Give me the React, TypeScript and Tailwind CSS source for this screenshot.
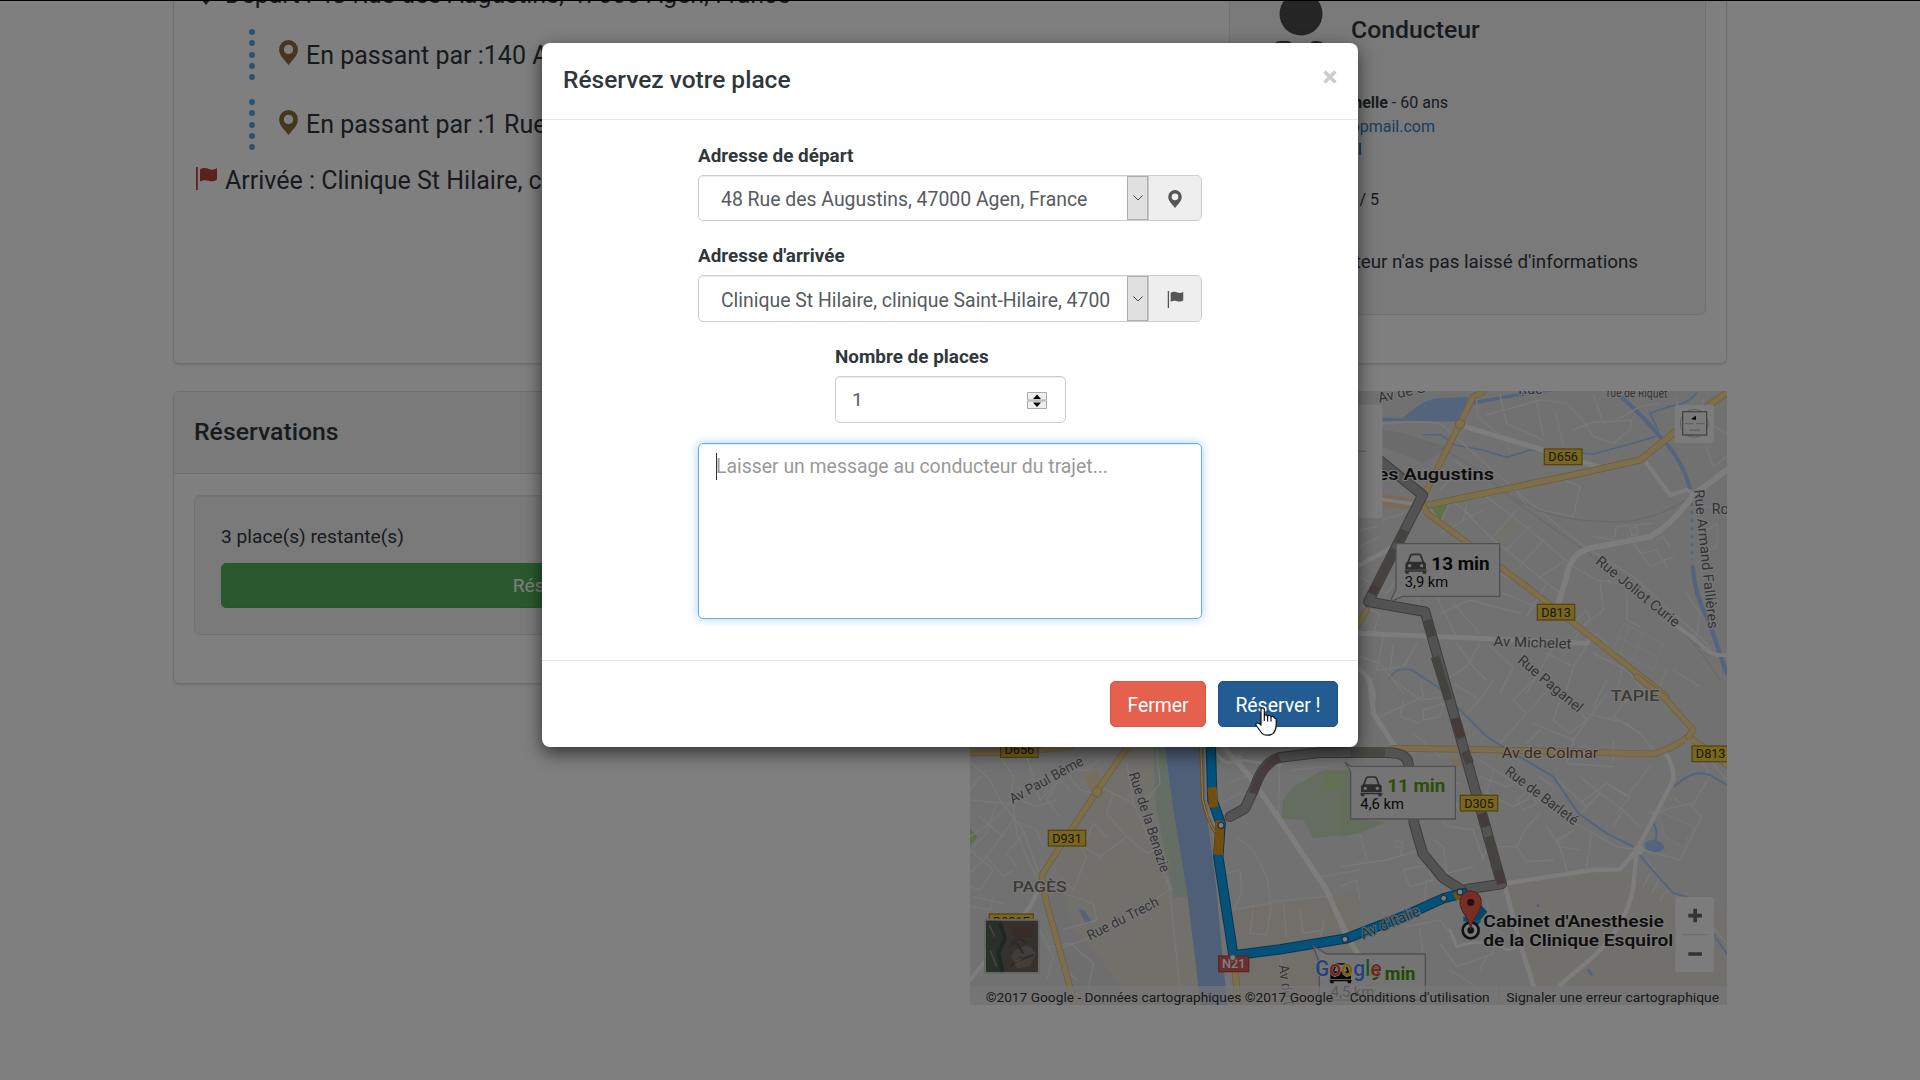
import React from "react";

type Pt = { x: number; y: number; t: string; s?: number; r?: number; f?: string; w?: number; l?: number };

const Txt = ({ x, y, t, s = 43, r = 0, f = "#66666a", w = 400, l }: Pt) => (
  <text
    x={x}
    y={y}
    fontSize={s}
    fontWeight={w}
    fill={f}
    stroke="#f0f0f0"
    strokeWidth={6}
    strokeLinejoin="round"
    paintOrder="stroke"
    textLength={l}
    lengthAdjust="spacingAndGlyphs"
    transform={`rotate(${r} ${x} ${y})`}
  >
    {t}
  </text>
);

const Shield = ({ x, y, w, t, red }: { x: number; y: number; w: number; t: string; red?: boolean }) => (
  <g>
    <rect x={x} y={y} width={w} height={47} fill={red ? "#d95f5f" : "#f5cd3c"} stroke={red ? "#c04848" : "#a88a20"} strokeWidth={4} />
    <text x={x + w / 2} y={y + 37} fontSize={38} textAnchor="middle" fontWeight={red ? 500 : 400} fill={red ? "#fff" : "#33301c"}>
      {t}
    </text>
  </g>
);

const CarIcon = ({ x, y, c = "#5a5a5a" }: { x: number; y: number; c?: string }) => (
  <g transform={`translate(${x} ${y})`}>
    <path d="M10 26 L18 5 Q20 2 24 2 H42 Q46 2 48 5 L56 26" fill="none" stroke={c} strokeWidth={5} />
    <path d="M2 30 Q4 24 10 24 H56 Q62 24 64 30 V48 H2 Z" fill={c} />
    <circle cx={15} cy={36} r={5} fill="#eee" />
    <circle cx={51} cy={36} r={5} fill="#eee" />
    <path d="M0 50H66V54H0Z M2 54H12V60H2Z M54 54H64V60H54Z" fill={c} />
  </g>
);

const Pin = ({ className }: { className: string }) => (
  <svg viewBox="0 0 18 24" className={className} fill="currentColor">
    <path fillRule="evenodd" d="M9 0a9 9 0 0 1 9 9c0 3-1.2 5-2.4 7L9 24 2.400 16C1.200 14 0 12 0 9a9 9 0 0 1 9-9Zm0 4.500a4.500 4.500 0 1 0 0 9 4.500 4.500 0 0 0 0-9Z" />
  </svg>
);

const Flag = ({ className }: { className: string }) => (
  <svg viewBox="0 0 21 23" className={className} fill="currentColor">
    <path d="M0 0h1.800v23H0zM4 2.500c3-2 6-1.800 9-.4 3 1 5.500.6 8-1.100v11.500c-3 2.400-5.500 2-8.500 1.200-3-.9-5.500-.7-8.500.9z" />
  </svg>
);

const Dots = () => (
  <div className="flex w-1.5 flex-col gap-[5.300px]">
    {[0, 1, 2, 3, 4].map((i) => (
      <span key={i} className="size-1.5 rounded-full bg-[#5aa5e0]" />
    ))}
  </div>
);

const ROAD = "#fbfbfb";
const YEL = "#fadc98";
const YELB = "#dcb873";
const WATER = "#a6c8fa";

const Road = ({ d, w = 5, c = ROAD }: { d: string; w?: number; c?: string }) => (
  <path d={d} fill="none" stroke={c} strokeWidth={w} strokeLinejoin="round" strokeLinecap="round" />
);
const Yellow = ({ d, w = 18 }: { d: string; w?: number }) => (
  <>
    <Road d={d} w={w + 4} c={YELB} />
    <Road d={d} w={w} c={YEL} />
  </>
);
const Route = ({ d, c = "#a6a6a6", b = "#7a7a7a", w = 26 }: { d: string; c?: string; b?: string; w?: number }) => (
  <>
    <Road d={d} w={w + 6} c={b} />
    <Road d={d} w={w} c={c} />
  </>
);
const Seg = ({ d, c, w = 26 }: { d: string; c: string; w?: number }) => (
  <path d={d} fill="none" stroke={c} strokeWidth={w} strokeLinejoin="round" />
);

/* The groups below each use a 3x drawing grid anchored on a part of the map. */
const RouteMap = () => (
  <svg viewBox="970 391 757 614" className="h-[614px] w-[757px] shrink-0 font-['Roboto',sans-serif]">
    <rect x={970} y={391} width={757} height={614} fill="#e3e3e4" />

    {/* north east base */}
    <g transform="translate(1340 380) scale(.33333)">
      <path d="M0 130 L128 150 L330 200 L250 250 L128 200 Z" fill="#d8d8d8" />
      <path d="M60 112 L190 114 Q250 55 300 55 L385 50 L360 125 L190 122 L60 124Z" fill={WATER} />
      <Road d="M370 74 L530 45 L640 28" w={11} c={WATER} />
      <Road d="M820 33 Q880 75 960 170 Q1030 240 1052 335" w={12} c={WATER} />
      <path d="M1055 345 L1056 540" fill="none" stroke={WATER} strokeWidth={7} strokeDasharray="10 14" />
      <Road d="M1058 560 Q1065 650 1105 720 L1160 880" w={13} c={WATER} />
      <Road d="M250 165 L300 163 L345 195 L430 210 L500 232 L570 210 L640 212 L760 222 L860 195 L945 170" w={5} c={WATER} />
      <Road d="M1070 40 Q1040 75 985 80 L930 100 L955 150" w={5} c={WATER} />
      <Road d="M150 895 Q165 860 215 870 L330 945" w={5} c={WATER} />
      <path d="M265 378 L328 372 L302 425 Z" fill="#bfe09c" stroke="#f2f2f2" strokeWidth={5} />
      <path d="M128 340 L225 358 L225 390 L128 380Z" fill="#f3d5b8" />
      <path d="M505 415 L545 440 L495 480 L450 485 Z" fill="#e7e2d6" />

      {[
        "M128 130L235 125L300 130L345 170L560 360L720 490L880 590L1000 700L1090 780L1130 830L1160 825",
        "M410 50L412 110L500 180L510 220",
        "M440 105L600 60L680 70L720 110L760 170L820 190L870 150L875 120L810 125L755 128L700 150",
        "M480 45L500 130L610 180",
        "M590 60L610 170M645 90L670 200M760 45L790 130M830 120L900 80L960 70",
        "M1010 55L1020 130L1090 120L1160 160M1090 60L1100 120",
        "M530 330L560 380L700 410L720 320L650 290L590 310",
        "M440 350L570 450L700 560L770 600L860 610",
        "M370 390L450 470L560 560L660 640M460 470L530 390M500 510L570 440M540 560L610 480M600 590L680 540M620 610L560 710",
        "M400 410L330 360M300 460L430 390M300 330L350 280M340 240L420 290M380 370L370 420",
        "M480 580L610 650M490 640L590 680M340 670L420 760M300 700L390 660L540 700M230 640L240 690M290 650L350 770",
        "M860 460L900 520L950 510L980 560M890 500L930 560L1000 530M760 470L820 480L830 440L940 430",
        "M870 445L890 440L890 465L875 465ZM950 480L970 470L990 500",
        "M700 730L740 690L750 720L690 790M720 740L780 770L850 850L830 940",
        "M780 600L790 690L700 760M860 620L860 720L900 740M1000 740L1070 770L1080 700L1040 640",
        "M60 500L120 470M60 590L140 640L170 600M128 420L190 400M60 450L110 440M60 680L120 700L100 760M60 830L120 850L190 940",
        "M130 770L110 870L180 860M230 790L190 860M160 790L150 870M350 790L400 860L440 900M420 790L380 860L300 910M450 800L520 860L480 940",
        "M640 800L600 870L560 940M620 820L700 860L740 800M700 860L680 930M760 820L860 870L920 940M980 870L950 940M1000 870L1080 920",
        "M1090 380L1160 385M1090 460L1130 430L1130 500L1110 510M1100 200L1120 260L1160 230",
      ].map((d) => (
        <Road key={d} d={d} w={4} c="#f2f2f2" />
      ))}
      <path d="M850 730L970 790L940 870L820 810ZM870 740L840 820M910 750L880 840M830 770L950 830" fill="none" stroke="#ededee" strokeWidth={3} />
      <Road d="M520 350 Q620 430 860 425 Q970 410 1060 345" w={4} c="#d2d2d2" />
      <Road d="M128 150 Q330 180 520 360 L760 530 Q1000 680 1140 900" w={5} c="#d4d4d4" />
      <Road d="M375 140 L610 210 L790 265" w={15} />
      <Road d="M655 670 L680 590 Q690 520 750 505 L930 470 Q990 440 1060 345 L1160 270" w={17} />
      <Road d="M920 250 L990 345 L1040 330 L1060 340" w={13} />
      <Road d="M60 760 L420 775 L740 790 L760 770" w={14} />
      <Road d="M60 555 L170 495" w={14} />
      <Road d="M128 358 L220 372" w={10} />
      <Road d="M1000 730 L1080 790 Q1110 830 1160 825" w={11} />
      <Road d="M60 870 Q100 900 100 960" w={14} />
      <Yellow d="M430 36 L400 50 L360 130 L310 230 L255 340" w={15} />
      <Yellow d="M1165 36 L1100 80 L900 240 L700 285 L250 378" w={17} />
      <Yellow d="M250 378 L262 400 L560 620 L740 760 L980 950" w={15} />
      <Yellow d="M50 740 L80 690" w={15} />
      <circle cx={360} cy={132} r={14} fill={YEL} stroke={YELB} strokeWidth={3} />
    </g>

    {/* south west base */}
    <g transform="translate(960 690) scale(.33333)">
      <path d="M485 230 L600 160 L720 945 L450 945 L340 700 L290 540 L380 330 Z" fill="#e5e0d6" />
      <path d="M485 230 L560 90 L620 150 L680 620 L720 945 L560 945 L510 870 L430 800 Z" fill="#e5e0d6" />
      <path d="M580 130 L612 170 L684 622 L640 622 L585 330 Z" fill="#ccdacb" />
      <path d="M600 60 L730 60 L735 330 L765 560 L802 945 L722 945 L680 600 L640 360 Z" fill="#9fbff0" />
      <path d="M820 660 L1200 610 L1200 945 L830 945 Z" fill="#e5ddd2" />
      <path d="M970 330 L1000 290 L1090 240 L1200 240 L1200 430 L1060 445 L1030 390 L965 385Z" fill="#c8dabf" />
      <path d="M1095 245 L1165 250 L1165 300 L1095 300Z" fill="#c3dfa6" />
      <path d="M30 415 L52 440 L30 468Z" fill="#b5dc92" />
      <path d="M355 657 L372 660 L394 690 L388 703 L374 696Z" fill={WATER} />
      <path d="M370 260 L410 240 L430 280 L400 310Z" fill="#f1d9b4" />
      <path d="M300 570 L345 720 L480 880 L500 945 L340 945 L265 640Z" fill="#dcdcdd" />
      {[
        "M30 215L90 270L120 330L190 420L240 560M120 200L160 260L150 340L90 400L30 440",
        "M30 330L140 340L180 330L230 350L290 330M60 260L30 300M200 200L240 330L300 270L330 300",
        "M30 550L80 500L160 390L230 420L250 470M80 500L130 560L160 540M30 480L100 540L60 600L30 590",
        "M160 350L170 430L210 520L230 560M60 380L130 440M110 340L80 430L40 470M190 430L140 490L170 530",
        "M240 290L300 240L380 240L420 210M300 380L260 330L290 280M330 260L360 300L400 310",
        "M420 290L460 310L520 340M460 310L440 370L500 440L420 500L370 470L400 400L440 440M500 440L560 490L600 470",
        "M360 470L380 500L340 600L300 560M310 610L400 640L410 690L310 720M280 500L240 540",
        "M290 780L400 740L480 690L630 600L600 520L520 340L500 220M630 610L660 900",
        "M270 770L330 760L400 820L380 920M300 820L350 870M130 640L40 620M170 670L200 720L240 760M80 800L60 860",
        "M590 180L600 280L560 330M620 560L635 600M230 700L280 800L260 870M30 650L90 660L100 620",
        "M830 440L880 480L920 560L930 635L1100 620M800 550L840 540L845 610L820 660L930 640M880 660L870 730L920 735L935 640",
        "M780 340L840 310L900 320M790 370L870 370M800 280L860 260M960 170L955 400M1000 240L1100 230M860 180L820 200",
        "M970 640L980 740M1090 690L1080 760M960 800L990 945M1080 560L1200 540M1020 660L1030 730L1090 720",
      ].map((d) => (
        <Road key={d} d={d} w={4} c="#f0f0ef" />
      ))}
      <Road d="M30 870 L210 650 L245 580" w={12} />
      <Road d="M790 170 L870 260 L960 390 L1100 600 L1160 740 L1200 800" w={16} />
      <Road d="M770 190 Q800 240 840 200 M840 210 L960 225" w={9} />
      <Yellow d="M30 188 L130 188 L330 172" w={14} />
      <Yellow d="M510 160 L410 305 L340 410 L245 555 L260 640 L345 945" w={15} />
      <circle cx={411} cy={306} r={15} fill={YEL} stroke={YELB} strokeWidth={3} />
      <Yellow d="M822 805 L835 945" w={17} />
      <Road d="M722 160 L728 330 Q745 400 765 425" w={10} c="#e39a22" />
      <Road d="M722 160 L728 330 Q745 400 765 425" w={3} c="#fff" />
      <Road d="M740 340 L790 700" w={4} c="#e8cda0" />
    </g>

    {/* south east base */}
    <g transform="translate(1340 680) scale(.33333)">
      <path d="M500 612 L760 572 L840 580 L1000 640 L1160 690 L1160 915 L580 915 L540 790Z" fill="#e5e1d8" />
      <path d="M0 282 L30 290 L36 420 L140 425 L60 460 L0 470Z" fill="#c5dab8" />
      <path d="M330 235 H390 V262 L340 258Z" fill="#f1d9b4" />
      <path d="M955 395 L1060 440 L1030 500 L975 470Z" fill="#dededf" stroke="#eee" strokeWidth={3} />
      {[
        "M160 0L240 60L330 50M120 110L250 50L240 0M190 60L180 110L240 130M250 90L310 70L300 110L250 120Z",
        "M340 10L420 60L460 0M420 60L360 120M480 190L560 100L650 0M560 100L520 60L580 0M580 130L700 180L800 40",
        "M620 0L660 60L640 120L690 160L740 120L710 80M740 100L860 130L910 170L940 210M760 80L800 0M860 60L820 110L900 160",
        "M700 180L680 250L820 260M820 180L820 240M560 190L600 150M420 240L540 320L650 400L760 460L830 500L900 510",
        "M420 290L500 320L560 300M460 270L440 340L520 380L560 360L580 330M530 360L570 330L590 370L550 390ZM600 290L640 320",
        "M640 290L740 380L780 340L720 290M740 380L700 430M780 340L850 390L900 440M850 390L820 440M800 310L860 350L930 260M720 370L800 310L870 350L830 400",
        "M650 490L700 450L650 480L670 530L680 570M755 455L740 560M620 440L660 500L720 510M530 500L560 440L600 400M430 540Q430 500 480 500L530 500L560 545L640 540",
        "M930 400L1050 370L1085 410L1020 540L910 510M1000 350L1020 370M1050 250L1110 240L1160 300M1085 240L1110 290L1060 370",
        "M930 580L910 620M960 590L935 640M990 620L960 660M920 540L1000 640L1100 720L1160 790M1000 640L1060 700",
        "M0 560L140 540L240 510M190 570L260 555L280 600L210 620ZM260 600L250 690L220 720M180 500L165 500L170 480L190 490L180 530",
        "M280 480L310 500L320 580L400 560M60 460L80 540M0 620L50 600L60 660M290 380L320 440M330 440L400 450L430 540M250 400L310 360L420 390",
        "M440 660L450 740L520 780M200 740L300 720L350 780M240 750L250 830M300 790L350 860L460 820L460 740M330 870L400 915M420 870L440 830",
        "M220 160L300 230M240 330L360 310M280 260L330 330L360 400M210 220L270 200L340 210",
      ].map((d) => (
        <Road key={d} d={d} w={4} c="#f2f2f2" />
      ))}
      <Road d="M350 80 L440 170 L530 225 L640 290 L715 400 L800 460 L880 500 L920 550 L1000 640 L1040 650 L1160 820" w={6} c={WATER} />
      <Road d="M1005 318 Q1060 265 1110 285 L1160 315 M940 430 Q955 450 947 480" w={6} c={WATER} />
      <path d="M915 490 Q935 472 960 485 L974 500 Q965 520 940 515 L917 508Z" fill={WATER} />
      <path d="M740 868 L748 866 L760 884 L752 888Z" fill={WATER} />
      <circle cx={594} cy={677} r={5} fill={WATER} />
      <Road d="M90 0 L100 100 L165 200" w={15} />
      <Road d="M500 610 L755 570 L840 568 L890 510 L1000 300 Q1000 240 970 215" w={13} />
      <Road d="M890 510 L880 620 Q860 740 760 830 L660 915" w={13} />
      <Road d="M495 620 L540 790 L580 915" w={14} />
      <Road d="M-10 690 L60 840" w={10} />
      <Road d="M330 750 L350 800 Q440 770 500 810 L540 800" w={8} />
      <circle cx={895} cy={510} r={16} fill={ROAD} />
      <Yellow d="M160 205 L400 208 L940 222 Q1000 205 1045 170 L1130 230 L1170 262" w={16} />
      <Yellow d="M890 -10 L970 50 L1060 150 L1045 170" w={15} />
      <path d="M1045 178 L1032 190 L1066 190Z" fill="#e3e3e4" />
    </g>

    {/* grey alternative routes */}
    <g transform="translate(1340 680) scale(.33333)">
      <Route d="M105 -670 L248 -555 L85 -235 L255 -205 L485 612 L380 628" />
      <Seg d="M193 -450 L172 -408 M165 -392 L108 -280 M262 -180 L276 -130 M285 -70 L325 60 M352 130 L366 175 M375 215 L390 250 M445 470 L475 575" c="#8b8780" />
      <Seg d="M108 -282 L96 -258 M345 115 L362 170 M425 400 L438 440 M474 570 L484 612" c="#8b7374" />
      <Route d="M-330 410 L-285 385 L-255 320 Q-230 245 -180 232 L-60 218 L130 218 Q200 215 205 250 L222 430 L248 520 L310 595 L365 630" />
      <Seg d="M-260 340 Q-240 260 -182 233" c="#8f7b7c" />
      <Seg d="M30 218 L135 218" c="#918e84" />
    </g>

    {/* blue selected route */}
    <g transform="translate(960 690) scale(.33333)">
      <Route d="M752 150 L757 330 L782 400 L775 500 L820 796 L960 778 L1130 750 L1160 745 L1340 675 L1450 625 L1510 610 L1545 690" c="#08a5f4" b="#0d6ca8" w={25} />
      <Seg d="M756 292 L761 352 M780 392 L775 494" c="#ef9b1a" w={27} />
      <Seg d="M1484 621 L1500 613" c="#ef9b1a" w={25} />
      <path d="M1510 680 H1570 L1560 690 L1565 695 H1510Z" fill="#08a5f4" />
      <path d="M1540 620 L1582 665 L1560 690 H1520Z" fill="#0b8ad0" />
      {[[783, 406], [818, 803], [1156, 748], [1451, 625], [1500, 606]].map(([x, y]) => (
        <circle key={x} cx={x} cy={y} r={9} fill="#fff" stroke="#3d6e8e" strokeWidth={4} />
      ))}
    </g>

    {/* labels */}
    <g transform="translate(1340 380) scale(.33333)">
      <Txt x={118} y={68} t="Av de G" r={-13} />
      <Txt x={535} y={42} t="Rue" />
      <Txt x={800} y={50} t="rue de Riquet" r={1} s={38} l={182} />
      <Txt x={1062} y={330} t="Rue Armand Fallières" r={84} l={420} />
      <Txt x={1115} y={402} t="Rou" />
      <Txt x={764} y={548} t="Rue Joliot Curie" r={39} l={310} />
      <Txt x={460} y={798} t="Av Michelet" r={2} l={234} />
      <Txt x={530} y={845} t="Rue Paganel" r={40} l={240} />
      <Txt x={812} y={964} t="TAPIE" s={44} w={500} f="#7a7568" l={146} />
      <Txt x={-40} y={300} t="Rue des Augustins" s={49} w={600} f="#1c1c1c" l={502} />
      <Shield x={613} y={207} w={113} t="D656" />
      <Shield x={592} y={673} w={112} t="D813" />
      <path d="M168 491 H479 V649 H188 L150 666 L168 628Z" fill="#e8e8e8" stroke="#a0a0a0" strokeWidth={4} />
      <CarIcon x={194} y={521} />
      <text x={274} y={569} fontSize={53} fontWeight={700} textLength={175} lengthAdjust="spacingAndGlyphs" fill="#111">13 min</text>
      <text x={194} y={620} fontSize={44} textLength={131} lengthAdjust="spacingAndGlyphs" fill="#111">3,9 km</text>
      <path d="M0 74 H122 Q127 74 127 79 V408 Q127 414 122 414 H0Z" fill="#f8f8f8" />
      <path d="M0 214H78" stroke="#bbb" strokeWidth={3} />
      <rect x={1004} y={75} width={118} height={114} rx={7} fill="#f8f8f8" />
      <circle cx={1063} cy={130} r={42} fill="none" stroke="#bcbcbc" strokeWidth={3} />
      <rect x={1028} y={95} width={72} height={70} fill="#f4f4f4" stroke="#8a8a8a" strokeWidth={4} />
      <path d="M1034 124H1094V138H1034Z" fill="#f4f4f4" />
      <path d="M1034 131H1060M1068 131H1094M1048 150H1080" stroke="#c4c4c4" strokeWidth={4} />
      <path d="M1054 116 L1068 107 V119 H1058Z" fill="#111" />
    </g>
    <g transform="translate(960 690) scale(.33333)">
      <Shield x={122} y={155} w={112} t="D656" />
      <Shield x={265} y={421} w={112} t="D931" />
      <Shield x={88} y={672} w={132} t="D931E" />
      <Shield x={776} y={798} w={90} t="N21" red />
      <circle cx={818} cy={803} r={9} fill="#fff" stroke="#8a8a9a" strokeWidth={4} />
      <Txt x={158} y={342} t="Av Paul Bême" r={-29} l={246} />
      <Txt x={506} y={252} t="Rue de la Benazie" r={72} l={312} />
      <Txt x={390} y={752} t="Rue du Trech" r={-27} l={235} />
      <Txt x={158} y={607} t="PAGÈS" s={45} w={500} f="#7a7568" l={162} />
      <Txt x={956} y={826} t="Av du Dr" r={83} l={150} />
      <rect x={72} y={686} width={168} height={166} rx={10} fill="#d0d0d0" />
      <rect x={78} y={692} width={156} height={154} rx={4} fill="#6d6259" />
      <path d="M78 692H125L140 745L120 790L132 846H78Z" fill="#565e54" />
      <path d="M120 700L135 745L115 790L128 846" fill="none" stroke="#3c5047" strokeWidth={12} />
      <path d="M150 705L190 715L225 700L215 745L160 740Z" fill="#72594f" />
      <path d="M165 780L200 765L228 790L210 830L170 835L155 800Z" fill="#857b70" />
      <path d="M145 770L170 760L190 790M180 810L220 795M150 830L185 800M150 760L180 745L200 760" stroke="#5a564c" strokeWidth={6} fill="none" />
      <path d="M88 705L104 740M90 780L110 830M165 815L185 805M200 780L215 775" stroke="#8a8a7c" strokeWidth={5} />
    </g>
    <g transform="translate(1340 680) scale(.33333)">
      <path d="M-62 850 L-80 798 L-40 822 H256 V960 H-62Z" fill="#e8e8e8" stroke="#a0a0a0" strokeWidth={4} />
      <CarIcon x={-31} y={850} c="#111" />
      <text x={90} y={899} fontSize={53} fontWeight={700} fill="#42920a" textLength={136} lengthAdjust="spacingAndGlyphs">9 min</text>
      <text x={-28} y={950} fontSize={44} fill="#444" textLength={131} lengthAdjust="spacingAndGlyphs">4,5 km</text>
      <path d="M32 259 H346 V417 H32 V275 L15 246Z" fill="#e8e8e8" stroke="#a0a0a0" strokeWidth={4} />
      <CarIcon x={61} y={289} />
      <text x={142} y={336} fontSize={53} fontWeight={700} textLength={174} lengthAdjust="spacingAndGlyphs" fill="#5a9c12">11 min</text>
      <text x={61} y={388} fontSize={44} textLength={131} lengthAdjust="spacingAndGlyphs" fill="#111">4,6 km</text>
      <Shield x={361} y={346} w={112} t="D305" />
      <Shield x={1056} y={198} w={112} t="D813" />
      <Txt x={485} y={235} t="Av de Colmar" f="#80522c" l={290} />
      <Txt x={492} y={280} t="Rue de Barleté" r={37} l={262} />
      <text x={70} y={778} fontSize={44} fill="#48606f" stroke="#a4d4f2" strokeWidth={6} paintOrder="stroke" textLength={188} lengthAdjust="spacingAndGlyphs" transform="rotate(-23 70 778)">Av d'Italie</text>
      <circle cx={15} cy={778} r={9} fill="#fff" stroke="#3d6e8e" strokeWidth={4} />
      <circle cx={392} cy={751} r={24} fill="#f4f4f4" stroke="#222" strokeWidth={8} />
      <circle cx={392} cy={751} r={10} fill="#222" />
      <path d="M392 748 C388 710 360 700 360 665 A32 32 0 0 1 424 665 C424 700 396 710 392 748Z" fill="#ea5f4c" stroke="#a83a2d" strokeWidth={3} />
      <circle cx={392} cy={667} r={11} fill="#5a1a14" />
      <Txt x={430} y={742} t="Cabinet d'Anesthesie" s={49} w={600} f="#1c1c1c" l={542} />
      <Txt x={430} y={799} t="de la Clinique Esquirol" s={49} w={600} f="#1c1c1c" l={570} />
      <rect x={1006} y={651} width={116} height={226} rx={6} fill="#f8f8f8" />
      <path d="M1028 764H1102" stroke="#d4d4d4" strokeWidth={3} />
      <path d="M1045 707H1086M1065.500 686V727M1045 822H1086" stroke="#666" strokeWidth={11} />
      <path d="M-1110 918H1160V974H-1110Z" fill="#efefef" fillOpacity={0.65} />
      <path d="M476 918V974" stroke="#ddd" strokeWidth={2} />
      <g fontSize={41} fill="#333">
        <text x={-1063} y={965} textLength={1042} lengthAdjust="spacingAndGlyphs">©2017 Google - Données cartographiques ©2017 Google</text>
        <text x={29} y={965} textLength={420} lengthAdjust="spacingAndGlyphs">Conditions d'utilisation</text>
        <text x={499} y={965} textLength={638} lengthAdjust="spacingAndGlyphs">Signaler une erreur cartographique</text>
      </g>
      <g fontSize={66} fontWeight={500} stroke="#fff" strokeWidth={3} paintOrder="stroke">
        <text x={-75} y={888} textLength={200} lengthAdjust="spacingAndGlyphs">
          <tspan fill="#4285f4">G</tspan>
          <tspan fill="#ea4335">o</tspan>
          <tspan fill="#fbbc05">o</tspan>
          <tspan fill="#4285f4">g</tspan>
          <tspan fill="#34a853">l</tspan>
          <tspan fill="#ea4335">e</tspan>
        </text>
      </g>
    </g>
  </svg>
);

const TripPanel = () => (
  <section className="flex h-[364px] justify-between rounded-b-md border border-t-0 border-[#ddd] bg-white pl-[21px] pr-5 shadow-sm">
    <div className="flex flex-col text-[25px] leading-[32px]">
      <div className="-mt-[21px] flex h-8 items-center whitespace-nowrap">
        <Pin className="-mt-1 ml-[2px] mr-2.5 h-6 w-[18px] text-[#333]" />
        <span>Départ : 48 Rue des Augustins, 47000 Agen, France</span>
      </div>
      <div className="mt-[18px] flex h-[52px] items-start pl-[54px]">
        <Dots />
        <Pin className="ml-6 mt-[11px] h-[25px] w-[19px] text-[#8a6d3b]" />
        <span className="ml-2 mt-[11px] whitespace-nowrap">En passant par :140 Avenue</span>
      </div>
      <div className="mt-[18px] flex h-[52px] items-start pl-[54px]">
        <Dots />
        <Pin className="ml-6 mt-[11px] h-[25px] w-[19px] text-[#8a6d3b]" />
        <span className="ml-2 mt-[10px] whitespace-nowrap">En passant par :1 Rue</span>
      </div>
      <div className="mt-[14px] flex h-8 items-start">
        <Flag className="ml-px mt-[2px] h-[23px] w-[21px] text-[#b7433b]" />
        <span className="ml-2 whitespace-nowrap">Arrivée : Clinique St Hilaire, clinique</span>
      </div>
    </div>
    <aside className="flex h-[315px] w-[477px] flex-col rounded-b-md border border-t-0 border-[#e3e3e3] bg-[#f5f5f5] pl-[41px]">
      <div className="flex h-[87px]">
        <svg viewBox="0 0 60 60" className="h-[60px] w-[60px] shrink-0 text-[#4a4a4a]" fill="currentColor">
          <circle cx="30" cy="14" r="21.500" />
          <path d="M2 60V49q0-8 8-8h6q4 0 6 4l8 9 8-9q2-4 6-4h2q8 0 8 8v11z" />
        </svg>
        <h3 className="ml-[20px] mt-3 text-[24.800px] font-medium leading-9">Conducteur</h3>
      </div>
      <div className="flex w-[177px] flex-col items-end whitespace-nowrap text-base leading-6">
        <p className="mt-1"><b>Michelle</b> - 60 ans</p>
        <p className="mr-[13px] text-[#337ab7]">yopmail.com</p>
        <p className="-mt-px mr-[86px] text-[#1f4f7c]">Email</p>
        <p className="mr-[69px] mt-[26px]">5 / 5</p>
      </div>
      <p className="mt-[38px] w-[367px] self-start whitespace-nowrap text-[18.800px] leading-6">
        <span className="float-right">Le conducteur n'as pas laissé d'informations</span>
      </p>
    </aside>
  </section>
);

const ReservationPanel = () => (
  <section className="h-[293px] w-[757px] rounded-md border border-[#ddd] bg-white shadow-sm">
    <header className="flex h-[82px] items-center border-b border-[#ddd] bg-[#f5f5f5] pb-0.5 pl-5">
      <h3 className="text-[24.800px] font-medium">Réservations</h3>
    </header>
    <div className="mx-5 mt-[21px] h-[140px] rounded-md border border-[#e3e3e3] bg-[#f5f5f5] px-[26px] pt-7 shadow-[inset_0_1px_1px_rgba(0,0,0,.05)]">
      <p className="relative top-px text-[19.200px] leading-6">3 place(s) restante(s)</p>
      <div className="mt-[15px] flex h-[45px] items-center justify-center rounded-[5px] border border-[#4cae4c] bg-[#57b25f] pr-[3px] pt-0.5 text-[19.200px] text-white">Réserver</div>
    </div>
  </section>
);

const SelectRow = ({ label, value, icon, h, cls }: { label: string; value: string; icon: React.ReactNode; h: string; cls: string }) => (
  <div className={cls}>
    <div className="h-[31px] text-[18.900px] font-bold leading-6">{label}</div>
    <div className={`flex ${h} overflow-hidden rounded-[5px] border border-[#ccc] text-[#555b60] shadow-[inset_0_1px_1px_rgba(0,0,0,.075)]`}>
      <div className="flex w-[428px] items-center overflow-hidden whitespace-nowrap pl-[22px] pt-1 text-[19.400px]">{value}</div>
      <div className="flex w-[21px] items-center justify-center border border-[#adadad] bg-[#e1e1e1]">
        <svg viewBox="0 0 10 6" className="h-1.5 w-2.5" fill="none" stroke="#444"><path d="M.5.500 5 5 9.500.500" /></svg>
      </div>
      <div className="flex flex-1 items-center justify-center border-l border-[#ccc] bg-[#eee] pt-0.5 text-[#555]">{icon}</div>
    </div>
  </div>
);

const Modal = () => (
  <div className="flex h-[704px] w-[816px] flex-col rounded-lg bg-white shadow-[0_6px_18px_rgba(0,0,0,.6)]">
    <header className="flex h-[77px] items-start justify-between border-b border-[#e5e5e5] pl-[21px] pr-[21px]">
      <h4 className="mt-[19px] text-[24.500px] font-medium leading-9">Réservez votre place</h4>
      <svg viewBox="0 0 14 14" className="mt-[27px] size-3.5" stroke="#ccc" strokeWidth="3.400"><path d="M1.500 1.500l11 11M12.500 1.500l-11 11" /></svg>
    </header>
    <div className="flex h-[540px] flex-col pl-[156px]">
      <SelectRow cls="mt-[24px] w-[504px]" h="h-[46px]" label="Adresse de départ" value="48 Rue des Augustins, 47000 Agen, France" icon={<Pin className="h-[18px] w-3.5" />} />
      <SelectRow cls="mt-[23px] w-[504px]" h="h-[47px]" label="Adresse d'arrivée" value="Clinique St Hilaire, clinique Saint-Hilaire, 4700" icon={<Flag className="h-[17px] w-[17px]" />} />
      <div className="ml-[137px] mt-[23px] w-[231px]">
        <div className="h-[31px] text-[18.900px] font-bold leading-6">Nombre de places</div>
        <div className="flex h-[47px] items-center justify-between rounded-[5px] border border-[#ccc] pl-4 pr-[18px] pt-0.5 text-[19.200px] text-[#555b60] shadow-[inset_0_1px_1px_rgba(0,0,0,.075)]">
          <span>1</span>
          <svg viewBox="0 0 20 17" className="h-[17px] w-5">
            <path d="M.5.500h19v7.500H.5zM.5 9h19v7.500H.5z" fill="#eee" stroke="#aaa" />
            <path d="M6 7 10 2.500 14 7zM6 10.500 10 15 14 10.500z" fill="#000" />
          </svg>
        </div>
      </div>
      <div className="mt-5 flex h-[176px] w-[504px] items-start rounded-[5px] border border-[#66afe9] pl-[18px] pt-[9px] text-[19.400px] leading-7 text-[#999] shadow-[inset_0_1px_1px_rgba(0,0,0,.075),0_0_10px_rgba(102,175,233,.6)]">
        <span className="-ml-px -mr-px h-[27px] w-px bg-[#333]" />
        <span>Laisser un message au conducteur du trajet...</span>
      </div>
    </div>
    <footer className="flex flex-1 items-start justify-end gap-3 border-t border-[#e5e5e5] pr-5 pt-5 text-[19.400px] text-white">
      <div className="flex h-[46px] w-24 items-center justify-center rounded-[5px] border border-[#dc5442] bg-[#e5604d] pt-[4px]">Fermer</div>
      <div className="relative flex h-[46px] w-[120px] items-center justify-center whitespace-nowrap rounded-[5px] border border-[#1d4f80] bg-[#225c92] pt-[4px]">
        Réserver !
        <svg viewBox="0 0 22 29" className="absolute left-[36px] top-[25px] h-[29px] w-[22px]" fill="#fff" stroke="#111" strokeWidth="1.200" strokeLinejoin="round">
          <path d="M6 2.500Q6 .8 7.600.8T9.300 2.500V9q0-1.200 1.400-1.200T12.600 9.500q.2-1.200 1.700-1t1.700 1.700q.4-1 1.700-.8t1.700 1.700q1.800-.4 1.800 1.800v5q0 5-3 8.500-2 1.800-6 1.800t-5.500-2.200L1.200 18.500Q.4 17 1.600 16.300t2.600.2L6 18z" />
          <path d="M9.300 9v5M12.600 9.500v5M16 10.500v4" />
        </svg>
      </div>
    </footer>
  </div>
);

export default function App() {
  return (
    <div className="relative h-[1080px] w-[1920px] overflow-hidden bg-white font-['Roboto',sans-serif] text-[#30373c]">
      <main className="ml-[173px] flex w-[1554px] flex-col">
        <TripPanel />
        <div className="mt-[27px] flex items-start justify-between">
          <ReservationPanel />
          <RouteMap />
        </div>
      </main>
      <div className="absolute inset-0 flex items-start border-t border-black bg-black/50 pl-[542px] pt-[42px]">
        <Modal />
      </div>
    </div>
  );
}
